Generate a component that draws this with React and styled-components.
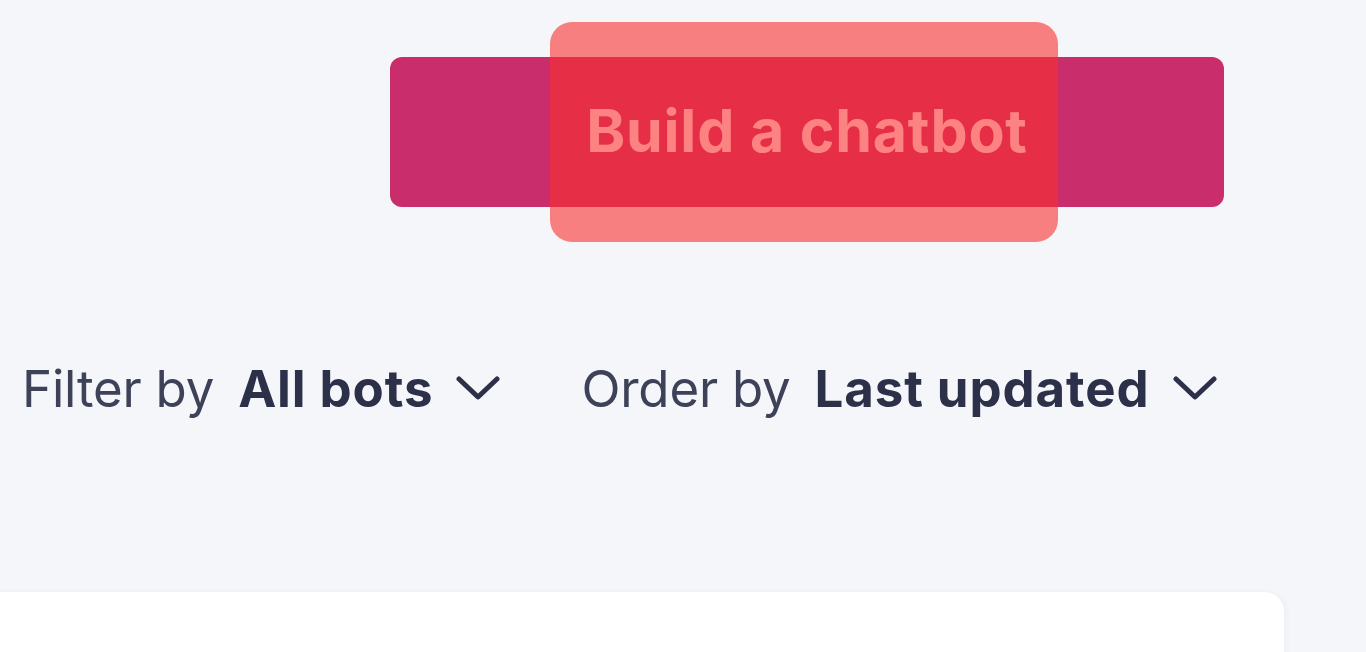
import React from "react";
import styled, { createGlobalStyle } from "styled-components";

const Global = createGlobalStyle`
  html, body { margin: 0; padding: 0; background: #f5f6fa; overflow: hidden; }
  body { font-family: Inter, "Noto Sans", sans-serif; }
`;

const Page = styled.div`
  width: 1366px;
  height: 652px;
  padding-top: 57px;
  box-sizing: border-box;
  overflow: hidden;
`;

const Header = styled.div`
  display: flex;
  justify-content: flex-end;
  padding-right: 142px;
`;

const BuildButton = styled.button`
  position: relative;
  width: 834px;
  height: 150px;
  border: none;
  border-radius: 12px;
  background: #c92d6b;
  color: #ffffff;
  font-family: Inter, "Noto Sans", sans-serif;
  font-weight: 700;
  font-size: 59px;
  letter-spacing: 0.8px;
  display: flex;
  align-items: center;
  justify-content: center;
  padding: 0 0 4px 0;
  cursor: pointer;
`;

const Highlight = styled.span`
  position: absolute;
  left: 160px;
  top: -35px;
  width: 508px;
  height: 220px;
  border-radius: 22px;
  background: rgba(250, 49, 47, 0.6);
  pointer-events: none;
`;

const Toolbar = styled.div`
  display: flex;
  align-items: center;
  gap: 81px;
  padding-left: 22px;
  margin-top: 151px;
  height: 60px;
`;

const Control = styled.div`
  display: flex;
  align-items: center;
`;

const Label = styled.span`
  font-size: 51px;
  font-weight: 400;
  color: #3d4258;
  letter-spacing: -0.2px;
  margin-right: 24px;
`;

const Value = styled.span`
  font-size: 51px;
  font-weight: 700;
  color: #2c3049;
  letter-spacing: 0.9px;
  margin-right: 23px;
`;

const Chevron = () => (
  <svg width="44" height="26" viewBox="0 0 44 26" fill="none">
    <path d="M3 4 L22 22 L41 4" stroke="#2c3049" strokeWidth="5" strokeLinecap="round" strokeLinejoin="round" />
  </svg>
);

const Card = styled.div`
  margin-top: 174px;
  margin-left: -20px;
  width: 1304px;
  height: 120px;
  background: #ffffff;
  border-radius: 20px;
  box-shadow: 2px 0 6px rgba(40, 50, 90, 0.04);
`;

export default function App() {
  return (
    <>
      <Global />
      <Page>
        <Header>
          <BuildButton>
            Build a chatbot
            <Highlight />
          </BuildButton>
        </Header>
        <Toolbar>
          <Control>
            <Label>Filter by</Label>
            <Value>All bots</Value>
            <Chevron />
          </Control>
          <Control>
            <Label>Order by</Label>
            <Value>Last updated</Value>
            <Chevron />
          </Control>
        </Toolbar>
        <Card />
      </Page>
    </>
  );
}
